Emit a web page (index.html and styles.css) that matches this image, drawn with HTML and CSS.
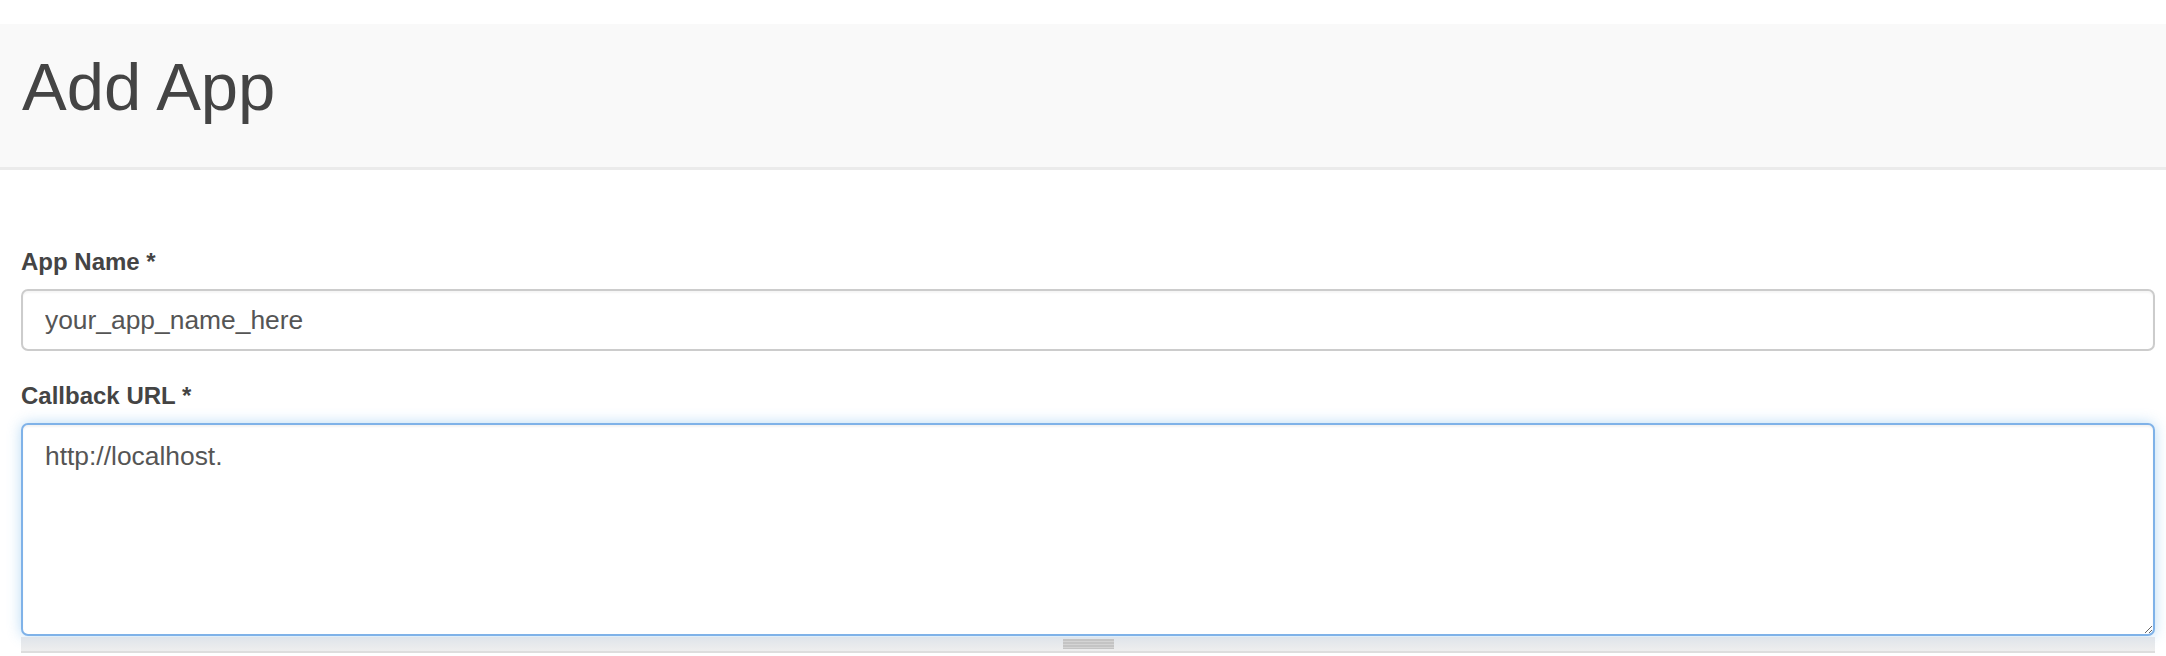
FILE: index.html
```html
<!DOCTYPE html>
<html lang="en">
<head>
<meta charset="utf-8">
<title>Add App</title>
<link rel="stylesheet" href="styles.css">
</head>
<body>
<div class="page">
  <header class="page-header">
    <h1 class="title">Add App</h1>
  </header>
  <form class="app-form">
    <div class="form-group">
      <label class="label" for="app-name">App Name *</label>
      <input class="control" id="app-name" type="text" value="your_app_name_here">
    </div>
    <div class="form-group">
      <label class="label" for="callback">Callback URL *</label>
      <div class="textarea-wrap">
        <textarea class="control textarea focused" id="callback">http://localhost.</textarea>
        <div class="grippie"><span class="grip"></span></div>
      </div>
    </div>
  </form>
</div>
</body>
</html>
```

FILE: styles.css
```css
html, body {
  margin: 0;
  padding: 0;
  background: #ffffff;
}
body {
  font-family: "Liberation Sans", Arial, Helvetica, sans-serif;
  color: #444444;
  overflow: hidden;
}
.page {
  padding-top: 24px;
}
.page-header {
  background: #f9f9f9;
  border-bottom: 3px solid #ebebeb;
  padding: 27px 22px 44px;
}
.title {
  margin: 0;
  font-size: 67px;
  line-height: 72px;
  font-weight: normal;
  color: #444444;
}
.app-form {
  padding: 75px 11px 0 21px;
}
.form-group {
  margin-bottom: 28px;
}
.label {
  display: block;
  font-size: 24px;
  line-height: 34px;
  font-weight: bold;
  color: #444444;
  margin-bottom: 10px;
}
.control {
  display: block;
  box-sizing: border-box;
  width: 100%;
  height: 62px;
  margin: 0;
  padding: 0 22px;
  border: 2px solid #cccccc;
  border-radius: 7px;
  background: #ffffff;
  font-family: "Liberation Sans", Arial, Helvetica, sans-serif;
  font-size: 26.4px;
  color: #555555;
  box-shadow: inset 0 2px 2px rgba(0, 0, 0, 0.04);
  outline: none;
}
.textarea {
  height: 213px;
  padding: 13px 22px 11px;
  line-height: 37px;
  resize: vertical;
}
.focused {
  border-color: #7fb2e8;
  box-shadow: inset 0 2px 2px rgba(0, 0, 0, 0.05), 0 0 14px rgba(102, 175, 233, 0.45);
}
.textarea-wrap {
  display: flex;
  flex-direction: column;
}
.grippie {
  height: 14px;
  margin-top: 1px;
  background: linear-gradient(#dfe4ea, #eeeeee);
  border-bottom: 2px solid #dddddd;
  display: flex;
  justify-content: center;
  align-items: center;
}
.grip {
  display: block;
  width: 51px;
  height: 10px;
  background: repeating-linear-gradient(#c4c4c4 0, #c4c4c4 2px, #d4d4d4 2px, #d4d4d4 3px);
}
```
